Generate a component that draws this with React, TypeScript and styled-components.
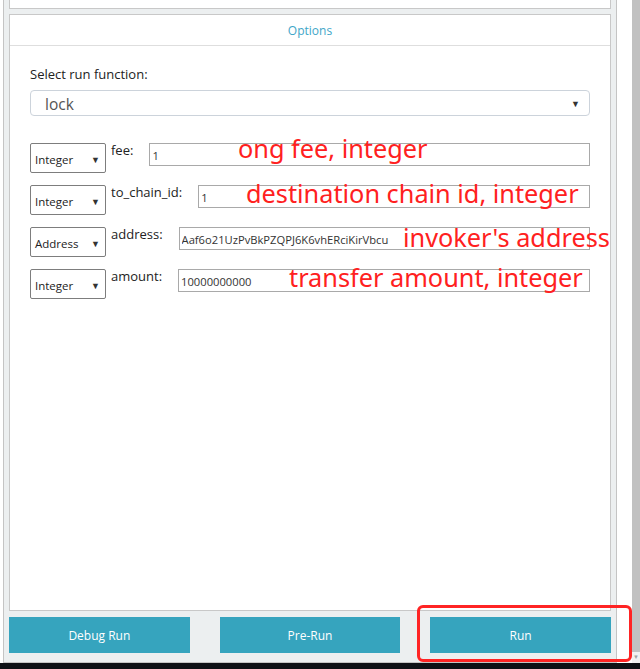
import React from "react";
import styled, { createGlobalStyle } from "styled-components";

const GlobalStyle = createGlobalStyle`
  html, body { margin: 0; padding: 0; background: #ffffff; }
  body { font-family: "Open Sans", "Noto Sans", sans-serif; }
  * { box-sizing: border-box; }
`;

const Screen = styled.div`
  position: relative;
  width: 640px;
  height: 669px;
  overflow: hidden;
  display: grid;
  grid-template-rows: 663px 6px;
`;

const Workspace = styled.div`
  display: flex;
  padding-left: 3px;
  background: #ffffff;
`;

const Panel = styled.div`
  width: 614px;
  display: flex;
  flex-direction: column;
  padding: 0 5px 9px;
  background: #eceff0;
  border: 1px solid #c4c4c4;
  border-top: none;
`;

const TopCard = styled.div`
  height: 9px;
  background: #ffffff;
  border: 1px solid #c8c8c8;
  border-top: none;
`;

const OptionsCard = styled.section`
  margin-top: 5px;
  height: 597px;
  background: #ffffff;
  border: 1px solid #c8c8c8;
  display: flex;
  flex-direction: column;
`;

const CardHeader = styled.div`
  height: 31px;
  border-bottom: 1px solid #dedede;
  display: flex;
  align-items: center;
  justify-content: center;
  font-size: 12px;
  color: #3ea6c8;
`;

const CardBody = styled.div`
  padding: 19px 20px 0;
  display: flex;
  flex-direction: column;
`;

const FieldLabel = styled.div`
  font-size: 13px;
  line-height: 18px;
  color: #222;
`;

const FunctionSelect = styled.div`
  margin-top: 7px;
  height: 26px;
  border: 1px solid #ccd3db;
  border-radius: 4px;
  display: flex;
  align-items: center;
  justify-content: space-between;
  padding: 1px 9px 0 14px;
  font-size: 15.5px;
  color: #555;
`;

const Caret = styled.span<{ $size: number }>`
  font-size: ${(p) => p.$size}px;
  color: #333;
  line-height: 1;
`;

const ParamList = styled.div`
  margin-top: 27px;
  display: flex;
  flex-direction: column;
  gap: 12px;
`;

const ParamRow = styled.div`
  position: relative;
  display: flex;
  align-items: flex-start;
  height: 30px;
`;

const TypeSelect = styled.div`
  width: 76px;
  height: 30px;
  flex: none;
  border: 1px solid #7d7d7d;
  border-radius: 2px;
  display: flex;
  align-items: center;
  justify-content: space-between;
  padding: 2px 5px 0 4px;
  font-size: 11.5px;
  color: #222;
`;

const ParamName = styled.label`
  margin-left: 5px;
  margin-right: 16px;
  font-size: 13px;
  line-height: 15px;
  color: #222;
  white-space: nowrap;
`;

const ParamInput = styled.input`
  flex: 1;
  min-width: 0;
  height: 23px;
  border: 1px solid #a9a9a9;
  border-radius: 0;
  padding: 2px 2px 0;
  font-family: "Open Sans", "Noto Sans", sans-serif;
  font-size: 11.2px;
  color: #333;
  background: #fff;
  outline: none;
`;

const Annotation = styled.span<{ $left: number; $top: number }>`
  position: absolute;
  left: ${(p) => p.$left}px;
  top: ${(p) => p.$top}px;
  font-family: "Noto Sans", sans-serif;
  font-size: 25.3px;
  line-height: 1;
  color: #ff2020;
  white-space: nowrap;
  pointer-events: none;
`;

const ButtonBar = styled.div`
  margin-top: 6px;
  display: grid;
  grid-template-columns: repeat(3, 1fr);
  gap: 30px;
`;

const ActionButton = styled.button`
  height: 36px;
  border: none;
  border-radius: 0;
  background: #36a4be;
  color: #ffffff;
  font-family: "Open Sans", "Noto Sans", sans-serif;
  font-size: 12px;
  cursor: pointer;
`;

const Gutter = styled.div`
  width: 15px;
  background: #ffffff;
`;

const ScrollTrack = styled.div`
  width: 8px;
  display: flex;
  flex-direction: column;
  align-items: center;
  background: #f1f1f1;
`;

const ScrollThumb = styled.div`
  width: 8px;
  height: 652px;
  background: #c1c1c1;
`;

const ScrollArrow = styled.span`
  margin-top: 2px;
  font-size: 6px;
  color: #a0a0a0;
  line-height: 1;
`;

const TaskBar = styled.div`
  background: #0e1116;
`;

const Highlight = styled.div`
  position: absolute;
  left: 417px;
  top: 605px;
  width: 215px;
  height: 57px;
  border: 3px solid #ff2424;
  border-radius: 6px;
  pointer-events: none;
`;

type Param = {
  type: string;
  name: string;
  value: string;
  note: string;
  noteLeft: number;
  noteTop: number;
};

const params: Param[] = [
  { type: "Integer", name: "fee:", value: "1", note: "ong fee, integer", noteLeft: 208, noteTop: -7 },
  { type: "Integer", name: "to_chain_id:", value: "1", note: "destination chain id, integer", noteLeft: 216, noteTop: -4 },
  {
    type: "Address",
    name: "address:",
    value: "Aaf6o21UzPvBkPZQPJ6K6vhERciKirVbcu",
    note: "invoker's address",
    noteLeft: 373,
    noteTop: -2,
  },
  { type: "Integer", name: "amount:", value: "10000000000", note: "transfer amount, integer", noteLeft: 259, noteTop: -4 },
];

export default function App() {
  return (
    <Screen>
      <GlobalStyle />
      <Workspace>
        <Panel>
          <TopCard />
          <OptionsCard>
            <CardHeader>Options</CardHeader>
            <CardBody>
              <FieldLabel>Select run function:</FieldLabel>
              <FunctionSelect>
                <span>lock</span>
                <Caret $size={9}>▼</Caret>
              </FunctionSelect>
              <ParamList>
                {params.map((p) => (
                  <ParamRow key={p.name}>
                    <TypeSelect>
                      <span>{p.type}</span>
                      <Caret $size={9}>▼</Caret>
                    </TypeSelect>
                    <ParamName>{p.name}</ParamName>
                    <ParamInput readOnly value={p.value} />
                    <Annotation $left={p.noteLeft} $top={p.noteTop}>
                      {p.note}
                    </Annotation>
                  </ParamRow>
                ))}
              </ParamList>
            </CardBody>
          </OptionsCard>
          <ButtonBar>
            <ActionButton>Debug Run</ActionButton>
            <ActionButton>Pre-Run</ActionButton>
            <ActionButton>Run</ActionButton>
          </ButtonBar>
        </Panel>
        <Gutter />
        <ScrollTrack>
          <ScrollThumb />
          <ScrollArrow>▼</ScrollArrow>
        </ScrollTrack>
      </Workspace>
      <TaskBar />
      <Highlight />
    </Screen>
  );
}
